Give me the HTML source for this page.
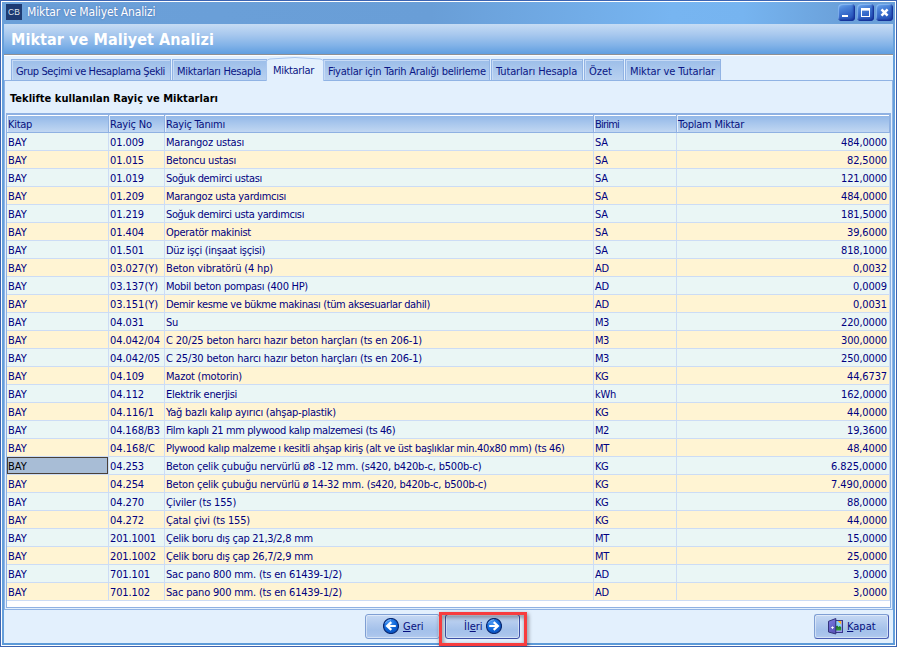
<!DOCTYPE html>
<html lang="tr"><head><meta charset="utf-8"><title>Miktar ve Maliyet Analizi</title>
<style>
html,body{margin:0;padding:0;}
body{width:897px;height:647px;overflow:hidden;position:relative;background:#669fdb;
 font-family:"DejaVu Sans Condensed","Liberation Sans",sans-serif;font-size:11px;color:#000080;}
div{box-sizing:border-box;}
.abs{position:absolute;}
#frame{position:absolute;left:0;top:0;width:897px;height:647px;border:1px solid #3c64b2;}
#frame2{position:absolute;left:1px;top:1px;width:895px;height:645px;border:1px solid #ffffff;}
#tbar{position:absolute;left:2px;top:2px;width:893px;height:22px;
 background:linear-gradient(90deg,#6ba0d9 0%,#699ed7 48%,#77b5f1 75%,#76b4f0 83%,#6ba1da 94%,#6a9fd8 100%);}
#ticon{position:absolute;left:6px;top:4px;width:16px;height:16px;background:#1d3a72;
 font-family:"Liberation Sans",sans-serif;font-size:8.5px;line-height:17px;text-align:center;letter-spacing:0;overflow:hidden;color:#dfe4ee;}
#ttext{position:absolute;left:27px;top:3px;height:18px;line-height:18px;font-size:12px;letter-spacing:-0.14px;color:#fff;white-space:nowrap;
 text-shadow:0 0 2px rgba(60,80,150,.6);}
.wb{position:absolute;top:4px;width:17px;height:17px;border-radius:4px;
 background:linear-gradient(160deg,#6ca8ee 0%,#4a82d8 30%,#3366c8 60%,#234cb0 100%);
 box-shadow:inset -1px -1px 1px 0 #16339a, inset 1px 1px 1px 0 rgba(150,195,245,.75), inset -2px -2px 2px 0 rgba(25,55,160,.6);}
#hdr{position:absolute;left:4px;top:24px;width:889px;height:30px;
 background:linear-gradient(180deg,#c6dcf4 0%,#a8c8ee 35%,#83b3e8 70%,#5f9ee0 100%);}
#hdrline{position:absolute;left:4px;top:54px;width:889px;height:1px;background:#8f9093;}
#hdrline2{position:absolute;left:4px;top:55px;width:889px;height:1px;background:#fdfeff;}
#htext{position:absolute;left:11px;top:30px;letter-spacing:0.08px;font-size:16px;font-weight:bold;color:#fff;line-height:20px;white-space:nowrap;}
#main{position:absolute;left:4px;top:56px;width:889px;height:587px;background:#e3f0fd;}
#page{position:absolute;left:4px;top:80px;width:889px;height:530px;border:1px solid #90b3e4;background:#e3f0fd;}
.tab{position:absolute;top:59px;height:22px;border:1px solid #91b3e4;border-bottom:none;
 background:linear-gradient(180deg,#9cbee9 0%,#abc8ed 50%,#bad2f0 100%);
 box-shadow:inset 1px 1px 0 0 #c6daf5;
 line-height:21px;padding-left:4px;white-space:nowrap;color:#0a1684;}
.tab > span{position:relative;top:1px;}
#tabact{position:absolute;left:266px;top:57px;width:58px;height:24px;}
#tabact > span{position:absolute;left:7px;top:7px;line-height:14px;color:#0a1684;white-space:nowrap;}
#heading{position:absolute;left:10px;top:92px;letter-spacing:0.03px;font-weight:bold;color:#000;line-height:14px;white-space:nowrap;font-size:11px;}
.grid{position:absolute;left:6px;top:113px;width:885px;height:495px;border:1px solid #8fb1e2;background:#fff;overflow:hidden;}
.ghead{position:absolute;left:0;top:0;width:883px;height:19px;border-top:1px solid #8fb1e2;border-bottom:1px solid #8fb1e2;
 background:linear-gradient(180deg,#ffffff 0,#ffffff 1px,#93b8e8 1px,#a9c7ed 50%,#c1d7f2 100%);}
.hc{position:absolute;top:0;height:17px;border-right:1px solid #8fb1e2;border-left:1px solid #e4eefb;line-height:17px;padding-left:0px;white-space:nowrap;color:#06107e;}
.hc span{position:relative;top:1px;}
.hc.c1{left:0;width:102px;}
.hc.c2{left:102px;width:56px;}
.hc.c3{left:158px;width:429px;}
.hc.c4{left:587px;width:83px;}
.hc.c5{left:670px;width:213px;}
.row{position:absolute;left:0;width:883px;height:18px;border-bottom:1px solid #ccdcf5;}
.row.o{background:#eaf6f5;}
.row.e{background:#fff4d3;}
.c{position:absolute;top:0;height:17px;line-height:19px;padding-left:1px;border-right:1px solid #ccdcf5;white-space:nowrap;overflow:hidden;}
.c.c1{left:0;width:102px;}
.c.c2{left:102px;width:56px;}
.c.c3{left:158px;width:429px;}
.c.c4{left:587px;width:83px;}
.c.c5{left:670px;width:213px;text-align:right;padding-right:2px;}
.c.sel{width:101px;border-right:none;box-shadow:1px 0 0 #ccdcf5;background:#a8bdd6;outline:1px solid #4a4038;outline-offset:-1px;color:#000;}
.btn{position:absolute;top:614px;height:25px;border:1px solid #7f9fd4;border-radius:3px;
 background:linear-gradient(180deg,#c6d9f4 0%,#b3cbee 35%,#a4c1ea 65%,#a9c4ec 85%,#b3cbee 100%);
 box-shadow:inset 0 0 0 1px rgba(255,255,255,.45);color:#06107e;}
.btn .t{position:absolute;top:5px;line-height:14px;white-space:nowrap;}
.btn u{text-decoration:underline;}
#redbox{position:absolute;left:439px;top:612px;width:88px;height:34px;border:3px solid #f73c3e;filter:drop-shadow(1px 2px 2px rgba(30,30,40,.62));}

#botband{position:absolute;left:2px;top:643px;width:893px;height:2px;background:#5d9ad8;}

</style></head>
<body>
<div id="tbar"></div>
<div id="frame"></div><div id="frame2"></div>
<div id="ticon">CB</div>
<div id="ttext">Miktar ve Maliyet Analizi</div>
<div class="wb" style="left:838px"><svg width="17" height="17" viewBox="0 0 17 17"><rect x="4" y="11" width="6" height="2" fill="#fff"/></svg></div>
<div class="wb" style="left:857px"><svg width="17" height="17" viewBox="0 0 17 17"><rect x="4.5" y="5.5" width="8" height="7" fill="none" stroke="#fff" stroke-width="1"/><rect x="4" y="4" width="9" height="2.6" fill="#fff"/></svg></div>
<div class="wb" style="left:876px"><svg width="17" height="17" viewBox="0 0 17 17"><path d="M5.5 5.4 L11.6 11.6 M11.6 5.4 L5.5 11.6" stroke="#fff" stroke-width="2.5" fill="none"/></svg></div>
<div id="hdr"></div><div id="hdrline"></div><div id="hdrline2"></div>
<div id="htext">Miktar ve Maliyet Analizi</div>
<div id="main"></div><div id="botband"></div>
<div class="tab" style="left:11px;width:160px"><span><span style="letter-spacing:-0.4px">Grup Seçimi ve Hesaplama Şekli</span></span></div>
<div class="tab" style="left:172px;width:95px"><span><span style="letter-spacing:-0.31px">Miktarları Hesapla</span></span></div>
<div class="tab" style="left:323px;width:167px"><span><span style="letter-spacing:-0.26px">Fiyatlar için Tarih Aralığı belirleme</span></span></div>
<div class="tab" style="left:491px;width:92px"><span><span style="letter-spacing:-0.13px">Tutarları Hesapla</span></span></div>
<div class="tab" style="left:584px;width:40px"><span><span style="letter-spacing:0.01px">Özet</span></span></div>
<div class="tab" style="left:625px;width:96px"><span><span style="letter-spacing:-0.1px">Miktar ve Tutarlar</span></span></div>
<div id="page"></div>
<div id="tabact"><svg width="58" height="24" viewBox="0 0 58 24" style="position:absolute;left:0;top:0"><path d="M0.5 24 L0.5 4 Q1 2.5 4 2 Q29 -1 54 2 Q57 2.5 57.5 4 L57.5 24 Z" fill="#e3f0fd" stroke="#a9c6ee" stroke-width="1"/><rect x="1" y="23" width="56" height="1.5" fill="#e3f0fd"/></svg><span><span style="letter-spacing:-0.32px">Miktarlar</span></span></div>
<div id="heading">Teklifte kullanılan Rayiç ve Miktarları</div>
<div class="grid">
<div class="ghead">
<div class="hc c1"><span style="letter-spacing:-0.29px">Kitap</span></div>
<div class="hc c2"><span style="letter-spacing:-0.17px">Rayiç No</span></div>
<div class="hc c3"><span style="letter-spacing:-0.22px">Rayiç Tanımı</span></div>
<div class="hc c4"><span style="letter-spacing:-0.79px">Birimi</span></div>
<div class="hc c5"><span style="letter-spacing:-0.24px">Toplam Miktar</span></div>
</div>
<div class="row o" style="top:19px">
<div class="c c1" style="letter-spacing:0.08px">BAY</div>
<div class="c c2" style="letter-spacing:-0.1px">01.009</div>
<div class="c c3" style="letter-spacing:-0.2px">Marangoz ustası</div>
<div class="c c4" style="letter-spacing:-0.13px">SA</div>
<div class="c c5" style="letter-spacing:-0.15px">484,0000</div>
</div>
<div class="row e" style="top:37px">
<div class="c c1" style="letter-spacing:0.08px">BAY</div>
<div class="c c2" style="letter-spacing:-0.1px">01.015</div>
<div class="c c3" style="letter-spacing:-0.23px">Betoncu ustası</div>
<div class="c c4" style="letter-spacing:-0.13px">SA</div>
<div class="c c5" style="letter-spacing:-0.13px">82,5000</div>
</div>
<div class="row o" style="top:55px">
<div class="c c1" style="letter-spacing:0.08px">BAY</div>
<div class="c c2" style="letter-spacing:-0.1px">01.019</div>
<div class="c c3" style="letter-spacing:-0.35px">Soğuk demirci ustası</div>
<div class="c c4" style="letter-spacing:-0.13px">SA</div>
<div class="c c5" style="letter-spacing:-0.15px">121,0000</div>
</div>
<div class="row e" style="top:73px">
<div class="c c1" style="letter-spacing:0.08px">BAY</div>
<div class="c c2" style="letter-spacing:-0.1px">01.209</div>
<div class="c c3" style="letter-spacing:-0.28px">Marangoz usta yardımcısı</div>
<div class="c c4" style="letter-spacing:-0.13px">SA</div>
<div class="c c5" style="letter-spacing:-0.15px">484,0000</div>
</div>
<div class="row o" style="top:91px">
<div class="c c1" style="letter-spacing:0.08px">BAY</div>
<div class="c c2" style="letter-spacing:-0.1px">01.219</div>
<div class="c c3" style="letter-spacing:-0.37px">Soğuk demirci usta yardımcısı</div>
<div class="c c4" style="letter-spacing:-0.13px">SA</div>
<div class="c c5" style="letter-spacing:-0.15px">181,5000</div>
</div>
<div class="row e" style="top:109px">
<div class="c c1" style="letter-spacing:0.08px">BAY</div>
<div class="c c2" style="letter-spacing:-0.1px">01.404</div>
<div class="c c3" style="letter-spacing:-0.28px">Operatör makinist</div>
<div class="c c4" style="letter-spacing:-0.13px">SA</div>
<div class="c c5" style="letter-spacing:-0.13px">39,6000</div>
</div>
<div class="row o" style="top:127px">
<div class="c c1" style="letter-spacing:0.08px">BAY</div>
<div class="c c2" style="letter-spacing:-0.1px">01.501</div>
<div class="c c3" style="letter-spacing:-0.31px">Düz işçi (inşaat işçisi)</div>
<div class="c c4" style="letter-spacing:-0.13px">SA</div>
<div class="c c5" style="letter-spacing:-0.15px">818,1000</div>
</div>
<div class="row e" style="top:145px">
<div class="c c1" style="letter-spacing:0.08px">BAY</div>
<div class="c c2" style="letter-spacing:-0.04px">03.027(Y)</div>
<div class="c c3" style="letter-spacing:-0.15px">Beton vibratörü (4 hp)</div>
<div class="c c4" style="letter-spacing:-0.2px">AD</div>
<div class="c c5" style="letter-spacing:-0.1px">0,0032</div>
</div>
<div class="row o" style="top:163px">
<div class="c c1" style="letter-spacing:0.08px">BAY</div>
<div class="c c2" style="letter-spacing:-0.04px">03.137(Y)</div>
<div class="c c3" style="letter-spacing:-0.28px">Mobil beton pompası (400 HP)</div>
<div class="c c4" style="letter-spacing:-0.2px">AD</div>
<div class="c c5" style="letter-spacing:-0.1px">0,0009</div>
</div>
<div class="row e" style="top:181px">
<div class="c c1" style="letter-spacing:0.08px">BAY</div>
<div class="c c2" style="letter-spacing:-0.04px">03.151(Y)</div>
<div class="c c3" style="letter-spacing:-0.38px">Demir kesme ve bükme makinası (tüm aksesuarlar dahil)</div>
<div class="c c4" style="letter-spacing:-0.2px">AD</div>
<div class="c c5" style="letter-spacing:-0.1px">0,0031</div>
</div>
<div class="row o" style="top:199px">
<div class="c c1" style="letter-spacing:0.08px">BAY</div>
<div class="c c2" style="letter-spacing:-0.1px">04.031</div>
<div class="c c3" style="letter-spacing:-0.28px">Su</div>
<div class="c c4" style="letter-spacing:-0.42px">M3</div>
<div class="c c5" style="letter-spacing:-0.15px">220,0000</div>
</div>
<div class="row e" style="top:217px">
<div class="c c1" style="letter-spacing:0.08px">BAY</div>
<div class="c c2" style="letter-spacing:-0.06px">04.042/04</div>
<div class="c c3" style="letter-spacing:-0.16px">C 20/25 beton harcı hazır beton harçları (ts en 206-1)</div>
<div class="c c4" style="letter-spacing:-0.42px">M3</div>
<div class="c c5" style="letter-spacing:-0.15px">300,0000</div>
</div>
<div class="row o" style="top:235px">
<div class="c c1" style="letter-spacing:0.08px">BAY</div>
<div class="c c2" style="letter-spacing:-0.06px">04.042/05</div>
<div class="c c3" style="letter-spacing:-0.16px">C 25/30 beton harcı hazır beton harçları (ts en 206-1)</div>
<div class="c c4" style="letter-spacing:-0.42px">M3</div>
<div class="c c5" style="letter-spacing:-0.15px">250,0000</div>
</div>
<div class="row e" style="top:253px">
<div class="c c1" style="letter-spacing:0.08px">BAY</div>
<div class="c c2" style="letter-spacing:-0.1px">04.109</div>
<div class="c c3" style="letter-spacing:-0.22px">Mazot (motorin)</div>
<div class="c c4" style="letter-spacing:-0.59px">KG</div>
<div class="c c5" style="letter-spacing:-0.13px">44,6737</div>
</div>
<div class="row o" style="top:271px">
<div class="c c1" style="letter-spacing:0.08px">BAY</div>
<div class="c c2" style="letter-spacing:-0.1px">04.112</div>
<div class="c c3" style="letter-spacing:-0.31px">Elektrik enerjisi</div>
<div class="c c4" style="letter-spacing:-0.27px">kWh</div>
<div class="c c5" style="letter-spacing:-0.15px">162,0000</div>
</div>
<div class="row e" style="top:289px">
<div class="c c1" style="letter-spacing:0.08px">BAY</div>
<div class="c c2" style="letter-spacing:-0.03px">04.116/1</div>
<div class="c c3" style="letter-spacing:-0.24px">Yağ bazlı kalıp ayırıcı (ahşap-plastik)</div>
<div class="c c4" style="letter-spacing:-0.59px">KG</div>
<div class="c c5" style="letter-spacing:-0.13px">44,0000</div>
</div>
<div class="row o" style="top:307px">
<div class="c c1" style="letter-spacing:0.08px">BAY</div>
<div class="c c2" style="letter-spacing:-0.12px">04.168/B3</div>
<div class="c c3" style="letter-spacing:-0.39px">Film kaplı 21 mm plywood kalıp malzemesi (ts 46)</div>
<div class="c c4" style="letter-spacing:-0.42px">M2</div>
<div class="c c5" style="letter-spacing:-0.13px">19,3600</div>
</div>
<div class="row e" style="top:325px">
<div class="c c1" style="letter-spacing:0.08px">BAY</div>
<div class="c c2" style="letter-spacing:0.02px">04.168/C</div>
<div class="c c3" style="letter-spacing:-0.32px">Plywood kalıp malzeme ı kesitli ahşap kiriş (alt ve üst başlıklar min.40x80 mm) (ts 46)</div>
<div class="c c4" style="letter-spacing:-0.3px">MT</div>
<div class="c c5" style="letter-spacing:-0.13px">48,4000</div>
</div>
<div class="row o" style="top:343px">
<div class="c c1 sel" style="letter-spacing:0.08px">BAY</div>
<div class="c c2" style="letter-spacing:-0.1px">04.253</div>
<div class="c c3" style="letter-spacing:-0.21px">Beton çelik çubuğu nervürlü ø8 -12 mm. (s420, b420b-c, b500b-c)</div>
<div class="c c4" style="letter-spacing:-0.59px">KG</div>
<div class="c c5" style="letter-spacing:-0.07px">6.825,0000</div>
</div>
<div class="row e" style="top:361px">
<div class="c c1" style="letter-spacing:0.08px">BAY</div>
<div class="c c2" style="letter-spacing:-0.1px">04.254</div>
<div class="c c3" style="letter-spacing:-0.22px">Beton çelik çubuğu nervürlü ø 14-32 mm. (s420, b420b-c, b500b-c)</div>
<div class="c c4" style="letter-spacing:-0.59px">KG</div>
<div class="c c5" style="letter-spacing:-0.07px">7.490,0000</div>
</div>
<div class="row o" style="top:379px">
<div class="c c1" style="letter-spacing:0.08px">BAY</div>
<div class="c c2" style="letter-spacing:-0.1px">04.270</div>
<div class="c c3" style="letter-spacing:-0.19px">Çiviler (ts 155)</div>
<div class="c c4" style="letter-spacing:-0.59px">KG</div>
<div class="c c5" style="letter-spacing:-0.13px">88,0000</div>
</div>
<div class="row e" style="top:397px">
<div class="c c1" style="letter-spacing:0.08px">BAY</div>
<div class="c c2" style="letter-spacing:-0.1px">04.272</div>
<div class="c c3" style="letter-spacing:-0.19px">Çatal çivi (ts 155)</div>
<div class="c c4" style="letter-spacing:-0.59px">KG</div>
<div class="c c5" style="letter-spacing:-0.13px">44,0000</div>
</div>
<div class="row o" style="top:415px">
<div class="c c1" style="letter-spacing:0.08px">BAY</div>
<div class="c c2" style="letter-spacing:-0.15px">201.1001</div>
<div class="c c3" style="letter-spacing:-0.27px">Çelik boru dış çap 21,3/2,8 mm</div>
<div class="c c4" style="letter-spacing:-0.3px">MT</div>
<div class="c c5" style="letter-spacing:-0.13px">15,0000</div>
</div>
<div class="row e" style="top:433px">
<div class="c c1" style="letter-spacing:0.08px">BAY</div>
<div class="c c2" style="letter-spacing:-0.15px">201.1002</div>
<div class="c c3" style="letter-spacing:-0.27px">Çelik boru dış çap 26,7/2,9 mm</div>
<div class="c c4" style="letter-spacing:-0.3px">MT</div>
<div class="c c5" style="letter-spacing:-0.13px">25,0000</div>
</div>
<div class="row o" style="top:451px">
<div class="c c1" style="letter-spacing:0.08px">BAY</div>
<div class="c c2" style="letter-spacing:-0.13px">701.101</div>
<div class="c c3" style="letter-spacing:-0.2px">Sac pano 800 mm. (ts en 61439-1/2)</div>
<div class="c c4" style="letter-spacing:-0.2px">AD</div>
<div class="c c5" style="letter-spacing:-0.1px">3,0000</div>
</div>
<div class="row e" style="top:469px">
<div class="c c1" style="letter-spacing:0.08px">BAY</div>
<div class="c c2" style="letter-spacing:-0.13px">701.102</div>
<div class="c c3" style="letter-spacing:-0.2px">Sac pano 900 mm. (ts en 61439-1/2)</div>
<div class="c c4" style="letter-spacing:-0.2px">AD</div>
<div class="c c5" style="letter-spacing:-0.1px">3,0000</div>
</div>
</div>
<div class="btn" style="left:365px;width:75px"><svg class="abs" style="left:17px;top:3px" width="16" height="16" viewBox="0 0 16 16"><defs><radialGradient id="bg1" cx="0.38" cy="0.28" r="0.85"><stop offset="0" stop-color="#4a98f4"/><stop offset="0.5" stop-color="#0f68da"/><stop offset="1" stop-color="#0a48b4"/></radialGradient></defs><circle cx="8" cy="8" r="7.5" fill="url(#bg1)" stroke="#0b2a72" stroke-width="1.2"/><path d="M12.8 8 L4.8 8 M8.3 4.1 L4.1 8 L8.3 11.9" fill="none" stroke="#fff" stroke-width="2.2"/><path d="M2.2 5.2 Q4.2 1.8 8 1.6" fill="none" stroke="#9ccbff" stroke-width="0.7"/></svg><span class="t" style="left:37px"><u>G</u>eri</span></div>
<div class="btn" style="left:445px;width:75px;border-color:#3b4fa6"><span class="t" style="left:18px">İl<u>e</u>ri</span><svg class="abs" style="left:40px;top:3px" width="16" height="16" viewBox="0 0 16 16"><circle cx="8" cy="8" r="7.5" fill="url(#bg1)" stroke="#0b2a72" stroke-width="1.2"/><path d="M3.2 8 L11.2 8 M7.7 4.1 L11.9 8 L7.7 11.9" fill="none" stroke="#fff" stroke-width="2.2"/><path d="M2.2 5.2 Q4.2 1.8 8 1.6" fill="none" stroke="#9ccbff" stroke-width="0.7"/></svg></div>
<div class="btn" style="left:814px;width:75px;border-color:#7f9fd4 #4a5fb4 #4a5fb4 #7f9fd4"><svg class="abs" style="left:13px;top:3px" width="16" height="17" viewBox="0 0 16 17"><defs><linearGradient id="dg" x1="0" y1="0" x2="0.4" y2="1"><stop offset="0" stop-color="#7c7ae4"/><stop offset="1" stop-color="#5b57ba"/></linearGradient><linearGradient id="gg" x1="0" y1="0" x2="0" y2="1"><stop offset="0" stop-color="#1d6e1d"/><stop offset="1" stop-color="#35a035"/></linearGradient></defs><rect x="7.5" y="2.5" width="7" height="12" fill="#9d99f2" stroke="#38388a" stroke-width="1"/><rect x="8" y="3" width="5.2" height="9.4" fill="#8ccff8"/><path d="M9.8 3 L13.2 3 L13.2 6.6 Z" fill="#ffb11f"/><path d="M8 8.2 L9.2 7.4 L10.6 9 L11.8 8 L13.2 9.2 L13.2 12.4 L8 12.4 Z" fill="url(#gg)"/><path d="M0.5 3.3 L7.8 0.5 L7.8 16 L0.5 14 Z" fill="url(#dg)" stroke="#33337a" stroke-width="1"/><path d="M4.5 8 L5.1 9 L6.2 9.6 L5.1 10.2 L4.5 11.2 L3.9 10.2 L2.8 9.6 L3.9 9 Z" fill="#fff"/></svg><span class="t" style="left:32px"><u>K</u>apat</span></div>
<div id="redbox"></div>

</body></html>
